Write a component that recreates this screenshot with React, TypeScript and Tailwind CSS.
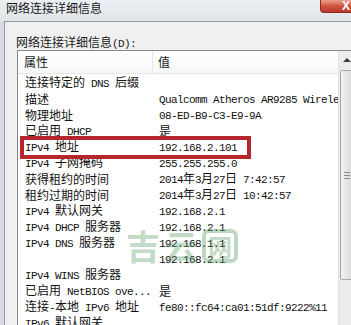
import React from 'react';

type Row = { name: string; value: string };

const rows: Row[] = [
    { name: '连接特定的 DNS 后缀', value: '' },
    { name: '描述', value: 'Qualcomm Atheros AR9285 Wireless Network Adapter' },
    { name: '物理地址', value: '08-ED-B9-C3-E9-9A' },
    { name: '已启用 DHCP', value: '是' },
    { name: 'IPv4 地址', value: '192.168.2.101' },
    { name: 'IPv4 子网掩码', value: '255.255.255.0' },
    { name: '获得租约的时间', value: '2014年3月27日 7:42:57' },
    { name: '租约过期的时间', value: '2014年3月27日 10:42:57' },
    { name: 'IPv4 默认网关', value: '192.168.2.1' },
    { name: 'IPv4 DHCP 服务器', value: '192.168.2.1' },
    { name: 'IPv4 DNS 服务器', value: '192.168.1.1' },
    { name: '', value: '192.168.2.1' },
    { name: 'IPv4 WINS 服务器', value: '' },
    { name: '已启用 NetBIOS ove...', value: '是' },
    { name: '连接-本地 IPv6 地址', value: 'fe80::fc64:ca01:51df:9222%11' },
    { name: 'IPv6 默认网关', value: '' },
];

// SimSun look: half-width latin, full-width CJK
const Mixed = ({ text }: { text: string }) => {
    const parts = text.match(/[\x00-\x7f]+|[^\x00-\x7f]+/g) || [];
    return (
        <>
            {parts.map((p, i) =>
                /^[\x00-\x7f]/.test(p) ? (
                    <span key={i} className="font-['Liberation_Mono',monospace] text-[11px] tracking-[-0.6px] whitespace-pre">
                        {p}
                    </span>
                ) : (
                    <span key={i} className="font-['Noto_Sans_CJK_SC',sans-serif] text-[12px]">
                        {p}
                    </span>
                )
            )}
        </>
    );
};

const ScrollBar = () => (
    <div className="w-[17px] shrink-0 flex flex-col bg-[#ececec] border-l border-[#e0e0e0]">
        <div className="h-[18px] flex items-center justify-center">
            <div className="w-0 h-0 border-x-[4px] border-x-transparent border-b-[4px] border-b-[#3a3a3a]" />
        </div>
        <div className="mt-[1px] h-[210px] mx-[1px] rounded-[2px] border border-[#a8a8a8] bg-gradient-to-r from-[#f4f4f4] via-[#e4e4e4] to-[#d6d6d6] flex items-center justify-center">
            <div className="flex flex-col gap-[2px] w-[6px]">
                <div className="h-px bg-[#8a8a8a]" />
                <div className="h-px bg-[#8a8a8a]" />
                <div className="h-px bg-[#8a8a8a]" />
            </div>
        </div>
        <div className="flex-1" />
        <div className="h-[18px] flex items-center justify-center mb-[2px]">
            <div className="w-0 h-0 border-x-[4px] border-x-transparent border-t-[4px] border-t-[#3a3a3a]" />
        </div>
    </div>
);

export default function App() {
    return (
        <div className="relative w-[351px] h-[325px] overflow-hidden bg-[#d7dce3] text-[#111]">
            {/* title bar */}
            <div className="h-[21px] bg-gradient-to-b from-[#eceff3] to-[#e1e5ea] pl-[6px] font-['Noto_Sans_CJK_SC',sans-serif] text-[12px] leading-[16px] text-[#1a1a1a]">
                网络连接详细信息
            </div>
            <div className="absolute right-0 top-0 w-[31px] h-[13px] rounded-bl-[4px] border-l border-b border-[#8c2b22] bg-gradient-to-b from-[#e9a08f] via-[#d2533f] to-[#b8392a] flex items-center justify-end pr-[1px]">
                <span className="font-['Liberation_Sans',sans-serif] font-bold text-[12px] leading-none text-white">X</span>
            </div>

            {/* panel */}
            <div className="ml-[4px] h-[304px] border-l border-t border-[#8f98a3] bg-[#f0f0f0] pt-[12px]">
                <div className="pl-[11px] h-[16px] leading-[16px] font-['Noto_Sans_CJK_SC',sans-serif] text-[12px] text-[#1a1a1a]">
                    网络连接详细信息<span className="font-['Liberation_Mono',monospace] text-[11px] tracking-[-0.6px]">(D):</span>
                </div>
                <div className="ml-[12px] w-[340px] h-[300px] border border-[#828790] bg-white flex">
                    <div className="w-[320px] shrink-0 overflow-hidden">
                        <div className="h-[23px] flex items-center bg-gradient-to-b from-white to-[#f6f7f9] border-b border-[#e3e5e8] font-['Noto_Sans_CJK_SC',sans-serif] text-[12px] text-[#1a1a1a]">
                            <div className="w-[135px] h-full flex items-center pl-[6px] border-r border-[#e3e5e8]">属性</div>
                            <div className="pl-[5px]">值</div>
                        </div>
                        <div className="flex flex-col">
                            {rows.map((r, i) => (
                                <div key={i} className="h-[16px] flex items-center leading-[16px] whitespace-nowrap">
                                    <div className="w-[135px] shrink-0 pl-[7px] overflow-hidden">
                                        <Mixed text={r.name} />
                                    </div>
                                    <div className="pl-[6px]">
                                        <Mixed text={r.value} />
                                    </div>
                                </div>
                            ))}
                        </div>
                    </div>
                    <ScrollBar />
                </div>
            </div>

            {/* watermark */}
            <div className="pointer-events-none absolute left-[126px] top-[229px] flex items-center gap-[4px] font-['Noto_Sans_CJK_SC',sans-serif] font-bold text-[34px] leading-none text-[#5f9e6c]/40">
                <span>吉</span>
                <span>云</span>
                <span className="rounded-[7px] border-[4px] border-[#5f9e6c]/40 text-[24px] px-[2px] py-[1px]">网</span>
            </div>

            {/* highlight */}
            <div className="pointer-events-none absolute left-[20px] top-[136px] w-[231px] h-[23px] border-[4px] border-[#b3262c]" />
        </div>
    );
}
